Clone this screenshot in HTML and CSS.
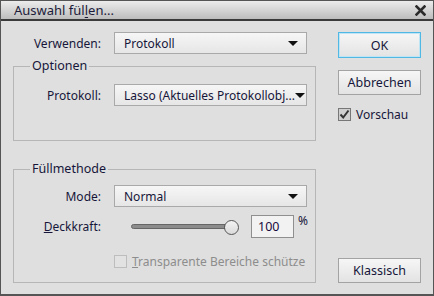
FILE: index.html
```html
<!DOCTYPE html>
<html lang="de">
<head>
  <meta charset="UTF-8">
  <title>Auswahl füllen</title>
  <link rel="stylesheet" href="styles.css">
</head>
<body>

<div class="dialog">
  <div class="titlebar">
    <span class="title">Auswahl fül<u>l</u>en...</span>
    <button class="close" aria-label="Schließen">
      <svg width="11" height="11" viewBox="0 0 11 11">
        <path d="M1.5 1.5 L9.5 9.5 M9.5 1.5 L1.5 9.5" stroke="#2b2b2b" stroke-width="2.6" stroke-linecap="square"/>
      </svg>
    </button>
  </div>

  <div class="content">
    <div class="main">
      <div class="row">
        <span class="label">Verwenden:</span>
        <div class="select"><span>Protokoll</span><i class="arrow"></i></div>
      </div>

      <fieldset class="group group-optionen">
        <legend>Optionen</legend>
        <div class="row">
          <span class="label">Protokoll:</span>
          <div class="select"><span>Lasso (Aktuelles Protokollobj...</span><i class="arrow"></i></div>
        </div>
      </fieldset>

      <fieldset class="group group-fuell">
        <legend>Füllmethode</legend>
        <div class="row">
          <span class="label">Mode:</span>
          <div class="select"><span>Normal</span><i class="arrow"></i></div>
        </div>
        <div class="row row-deck">
          <span class="label"><u>D</u>eckkraft:</span>
          <div class="slider">
            <div class="track"></div>
            <div class="thumb"></div>
          </div>
          <div class="number">100</div>
          <span class="percent">%</span>
        </div>
        <div class="row row-check">
          <span class="label"></span>
          <span class="checkbox disabled"></span>
          <span class="check-text disabled-text"><u>T</u>ransparente Bereiche schütze</span>
        </div>
      </fieldset>
    </div>

    <div class="side">
      <button class="btn btn-ok">OK</button>
      <button class="btn">Abbrechen</button>
      <label class="preview">
        <span class="checkbox checked">
          <svg width="11" height="11" viewBox="0 0 11 11">
            <path d="M1.5 5.5 L4.2 8.5 L9.5 1.5" fill="none" stroke="#333" stroke-width="2"/>
          </svg>
        </span>
        <span class="check-text">Vorschau</span>
      </label>
      <button class="btn btn-klassisch">Klassisch</button>
    </div>
  </div>
</div>

</body>
</html>
```

FILE: styles.css
```css
body {
  margin: 0;
  padding: 0;
  font-family: "Noto Sans", "Open Sans", sans-serif;
  font-size: 12px;
  color: #16163a;
  background: #dedede;
}
.dialog {
  width: 434px;
  height: 296px;
  box-sizing: border-box;
  border: 1px solid #555;
  border-bottom-width: 2px;
  background: #dfdfdf;
  display: flex;
  flex-direction: column;
}
.titlebar {
  height: 20px;
  border-bottom: 2px solid #3a3a3a;
  background: linear-gradient(to bottom, #ececec, #bdbdbd);
  display: flex;
  align-items: center;
  justify-content: space-between;
  padding: 0 6px 0 13px;
}
.title {
  font-size: 13px;
  color: #1c1c3a;
}
.title u {
  text-decoration-thickness: 1px;
  text-underline-offset: 2px;
}
.close {
  background: transparent;
  border: none;
  padding: 0;
  width: 13px;
  height: 13px;
  display: flex;
  align-items: center;
  justify-content: center;
}
.content {
  flex: 1;
  display: flex;
  padding: 11px 11px 16px 12px;
  gap: 22px;
}
.main {
  width: 303px;
  display: flex;
  flex-direction: column;
}
.row {
  display: flex;
  align-items: center;
}
.label {
  width: 88px;
  margin-right: 13px;
  text-align: right;
  flex-shrink: 0;
}
.group .label {
  width: 87px;
}
.select {
  width: 193px;
  height: 22px;
  box-sizing: border-box;
  border: 1px solid #a9a9a9;
  background: linear-gradient(to bottom, #f6f6f6, #e6e6e6);
  display: flex;
  align-items: center;
  justify-content: space-between;
  padding: 0 8px 0 9px;
  white-space: nowrap;
  overflow: hidden;
}
.arrow {
  width: 0;
  height: 0;
  border-left: 5px solid transparent;
  border-right: 5px solid transparent;
  border-top: 5px solid #111;
  flex-shrink: 0;
}
.group {
  margin: 0;
  border: 1px solid #b6b6b6;
  padding: 0;
  min-width: 0;
}
.group legend {
  margin-left: 16px;
  padding: 0 2px;
  font-size: 12.5px;
  line-height: 16px;
}
.group-optionen {
  margin-top: 4px;
  padding: 10px 0 34px;
}
.group-fuell {
  margin-top: 20px;
  padding: 8px 0 12px;
}
.row-deck {
  margin-top: 8px;
  height: 23px;
}
.slider {
  width: 109px;
  height: 16px;
  margin-left: 17px;
  display: flex;
  align-items: center;
  position: relative;
}
.track {
  width: 98px;
  height: 3px;
  border: 1px solid #666;
  border-radius: 3px;
  background: #8c8c8c;
}
.thumb {
  position: absolute;
  left: 93px;
  top: 1px;
  width: 13px;
  height: 13px;
  border: 1px solid #555;
  border-radius: 50%;
  background: linear-gradient(to bottom, #f3f3f3, #dadada);
}
.number {
  width: 43px;
  height: 23px;
  box-sizing: border-box;
  margin-left: 11px;
  border: 1px solid #8f8f8f;
  background: #f2f2f2;
  padding: 2px 0 0 6px;
  font-size: 12.5px;
  color: #1a0a40;
}
.percent {
  margin-left: 4px;
  align-self: flex-start;
  margin-top: -3px;
}
.row-check {
  margin-top: 15px;
}
.checkbox {
  width: 13px;
  height: 13px;
  box-sizing: border-box;
  border: 1px solid #777;
  background: #cfcfcf;
  display: flex;
  align-items: center;
  justify-content: center;
  flex-shrink: 0;
}
.checkbox.disabled {
  border-color: #bdbdbd;
  background: #e2e2e2;
}
.check-text {
  margin-left: 5px;
}
.disabled-text {
  color: #8d8d8d;
  white-space: nowrap;
}
.side {
  width: 83px;
  display: flex;
  flex-direction: column;
}
.btn {
  width: 83px;
  height: 25px;
  box-sizing: border-box;
  border: 1px solid #a3a3a3;
  background: linear-gradient(to bottom, #f6f6f6, #e3e3e3);
  font-family: inherit;
  font-size: 12.5px;
  color: #16163a;
  padding: 0;
  margin-bottom: 12px;
}
.btn-ok {
  height: 26px;
  border-color: #4fb8e4;
  box-shadow: inset 0 0 0 1px #bfe4f4;
}
.preview {
  display: flex;
  align-items: center;
  margin-top: -1px;
}
.btn-klassisch {
  margin-top: auto;
  margin-bottom: 0;
}
```
